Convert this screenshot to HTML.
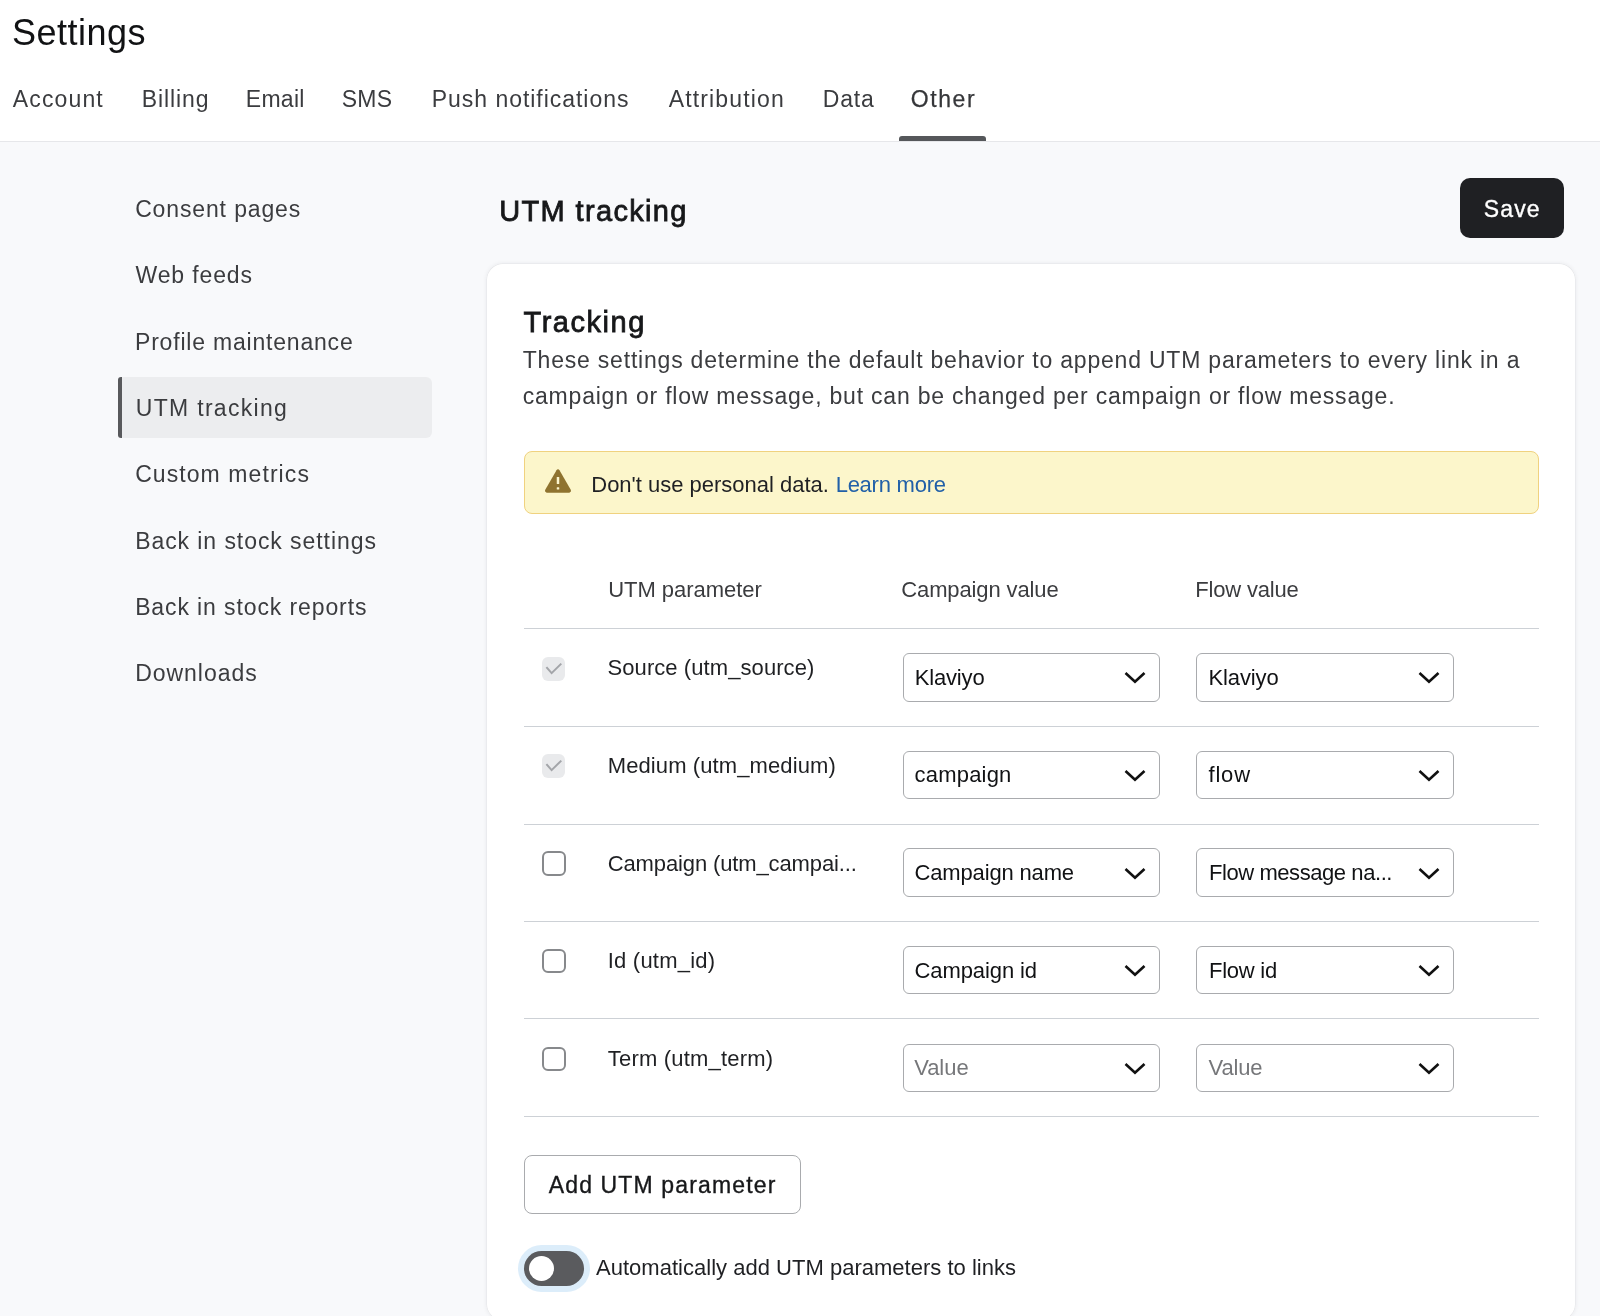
<!DOCTYPE html>
<html><head><meta charset="utf-8"><title>Settings</title>
<style>
html,body{margin:0;padding:0}
body{width:1600px;height:1316px;overflow:hidden;position:relative;background:#f8f9fb;font-family:"Liberation Sans",sans-serif}
.t{position:absolute;white-space:nowrap}
#root{position:absolute;left:0;top:0;width:1600px;height:1316px;will-change:transform}
</style></head><body><div id="root">
<div style="position:absolute;left:0px;top:0px;width:1600px;height:141px;background:#fff;border-bottom:1px solid #e6e7ea"></div>
<div class="t" style="left:12.00px;top:14.93px;font-size:36px;line-height:36px;color:#111214;letter-spacing:0.479px;">Settings</div>
<div class="t" style="left:12.75px;top:87.93px;font-size:23px;line-height:23px;color:#3b3c3f;letter-spacing:1.150px;">Account</div>
<div class="t" style="left:141.75px;top:87.93px;font-size:23px;line-height:23px;color:#3b3c3f;letter-spacing:0.900px;">Billing</div>
<div class="t" style="left:245.75px;top:87.93px;font-size:23px;line-height:23px;color:#3b3c3f;letter-spacing:0.287px;">Email</div>
<div class="t" style="left:341.75px;top:87.93px;font-size:23px;line-height:23px;color:#3b3c3f;letter-spacing:0.200px;">SMS</div>
<div class="t" style="left:431.75px;top:87.93px;font-size:23px;line-height:23px;color:#3b3c3f;letter-spacing:0.965px;">Push notifications</div>
<div class="t" style="left:668.75px;top:87.93px;font-size:23px;line-height:23px;color:#3b3c3f;letter-spacing:1.140px;">Attribution</div>
<div class="t" style="left:822.75px;top:87.93px;font-size:23px;line-height:23px;color:#3b3c3f;letter-spacing:0.800px;">Data</div>
<div class="t" style="left:910.75px;top:87.93px;font-size:23px;line-height:23px;color:#36373a;letter-spacing:1.600px;-webkit-text-stroke:0.25px #36373a;">Other</div>
<div style="position:absolute;left:899px;top:136px;width:87px;height:5px;background:#55575a;border-radius:3px 3px 0 0"></div>
<div style="position:absolute;left:118px;top:377.2px;width:314px;height:60.8px;background:#ecedef;border-radius:6px"></div>
<div style="position:absolute;left:117.5px;top:377.2px;width:4.5px;height:60.8px;background:#58595c;border-radius:3px 0 0 3px"></div>
<div class="t" style="left:135.15px;top:198.13px;font-size:23px;line-height:23px;color:#3b3c3f;letter-spacing:0.867px;">Consent pages</div>
<div class="t" style="left:135.55px;top:264.43px;font-size:23px;line-height:23px;color:#3b3c3f;letter-spacing:0.863px;">Web feeds</div>
<div class="t" style="left:135.00px;top:330.73px;font-size:23px;line-height:23px;color:#3b3c3f;letter-spacing:0.800px;">Profile maintenance</div>
<div class="t" style="left:135.75px;top:397.03px;font-size:23px;line-height:23px;color:#3b3c3f;letter-spacing:1.309px;">UTM tracking</div>
<div class="t" style="left:135.15px;top:463.33px;font-size:23px;line-height:23px;color:#3b3c3f;letter-spacing:1.077px;">Custom metrics</div>
<div class="t" style="left:135.15px;top:529.63px;font-size:23px;line-height:23px;color:#3b3c3f;letter-spacing:0.933px;">Back in stock settings</div>
<div class="t" style="left:135.15px;top:595.93px;font-size:23px;line-height:23px;color:#3b3c3f;letter-spacing:0.890px;">Back in stock reports</div>
<div class="t" style="left:135.15px;top:662.23px;font-size:23px;line-height:23px;color:#3b3c3f;letter-spacing:0.975px;">Downloads</div>
<div class="t" style="left:499.25px;top:197.15px;font-size:29px;line-height:29px;color:#17181a;letter-spacing:1.345px;-webkit-text-stroke:0.8px #17181a;">UTM tracking</div>
<div style="position:absolute;left:1460px;top:178px;width:103.5px;height:60px;background:#1f2023;border-radius:10px"></div>
<div class="t" style="left:1483.75px;top:198.03px;font-size:23px;line-height:23px;color:#ffffff;letter-spacing:1.133px;-webkit-text-stroke:0.35px #ffffff;">Save</div>
<div style="position:absolute;left:487px;top:263.7px;width:1088px;height:1056px;background:#fff;border-radius:16px;box-shadow:0 0 0 0.5px rgba(16,24,40,0.05),0 0 5px rgba(16,24,40,0.09)"></div>
<div class="t" style="left:523.50px;top:307.70px;font-size:29px;line-height:29px;color:#17181a;letter-spacing:1.521px;-webkit-text-stroke:0.8px #17181a;">Tracking</div>
<div class="t" style="left:522.75px;top:348.93px;font-size:23px;line-height:23px;color:#3b3c3f;letter-spacing:0.793px;">These settings determine the default behavior to append UTM parameters to every link in a</div>
<div class="t" style="left:522.75px;top:384.93px;font-size:23px;line-height:23px;color:#3b3c3f;letter-spacing:0.786px;">campaign or flow message, but can be changed per campaign or flow message.</div>
<div style="position:absolute;left:523.5px;top:451px;width:1015px;height:62.5px;box-sizing:border-box;background:#fcf6cb;border:1.5px solid #f0d27f;border-radius:8px"></div>
<svg style="position:absolute;left:543px;top:467px" width="30" height="28" viewBox="0 0 30 28"><path d="M15 2.2 Q15.9 2.2 16.5 3.2 L27.6 22.6 Q28.8 24.8 26.3 25.8 L3.7 25.8 Q1.2 24.8 2.4 22.6 L13.5 3.2 Q14.1 2.2 15 2.2 Z" fill="#8f732f"/><rect x="13.75" y="9.9" width="2.5" height="7.1" rx="0.5" fill="#fcf6cf"/><rect x="13.75" y="20.2" width="2.5" height="2.3" rx="0.5" fill="#fcf6cf"/></svg>
<div class="t" style="left:591.25px;top:474.18px;font-size:22px;line-height:22px;color:#1f2023;letter-spacing:-0.004px;">Don't use personal data.</div>
<div class="t" style="left:835.65px;top:474.18px;font-size:22px;line-height:22px;color:#2160a8;letter-spacing:-0.244px;">Learn more</div>
<div class="t" style="left:608.15px;top:578.58px;font-size:22px;line-height:22px;color:#3b3c3f;letter-spacing:-0.033px;">UTM parameter</div>
<div class="t" style="left:901.25px;top:578.58px;font-size:22px;line-height:22px;color:#3b3c3f;letter-spacing:-0.123px;">Campaign value</div>
<div class="t" style="left:1195.25px;top:578.58px;font-size:22px;line-height:22px;color:#3b3c3f;letter-spacing:-0.178px;">Flow value</div>
<div style="position:absolute;left:523.5px;top:628px;width:1015px;height:1px;background:#cdd1d6"></div>
<div style="position:absolute;left:523.5px;top:726px;width:1015px;height:1px;background:#cdd1d6"></div>
<div style="position:absolute;left:523.5px;top:823.5px;width:1015px;height:1px;background:#cdd1d6"></div>
<div style="position:absolute;left:523.5px;top:921px;width:1015px;height:1px;background:#cdd1d6"></div>
<div style="position:absolute;left:523.5px;top:1018px;width:1015px;height:1px;background:#cdd1d6"></div>
<div style="position:absolute;left:523.5px;top:1116px;width:1015px;height:1px;background:#cdd1d6"></div>
<div style="position:absolute;left:542.2px;top:656.65px;width:23.3px;height:24.2px;background:#e9eaec;border-radius:6px"></div>
<svg style="position:absolute;left:542.2px;top:656.65px" width="24" height="24" viewBox="0 0 24 24"><path d="M4.4 10.2 L9.6 16.1 L19.3 6.6" fill="none" stroke="#a3a5a9" stroke-width="2"/></svg>
<div class="t" style="left:607.50px;top:657.38px;font-size:22px;line-height:22px;color:#1f2023;letter-spacing:0.078px;">Source (utm_source)</div>
<div style="position:absolute;left:902.5px;top:653.0px;width:257.5px;height:48.5px;box-sizing:border-box;border:1.5px solid #a9abae;border-radius:6px;background:#fff"></div>
<div class="t" style="left:914.65px;top:666.73px;font-size:22px;line-height:22px;color:#111214;letter-spacing:-0.150px;">Klaviyo</div>
<svg style="position:absolute;left:1122.00px;top:668.25px" width="26" height="18" viewBox="0 0 26 18"><path d="M3.5 5 L13 13.8 L22.5 5" fill="none" stroke="#111" stroke-width="2.6"/></svg>
<div style="position:absolute;left:1196px;top:653.0px;width:257.5px;height:48.5px;box-sizing:border-box;border:1.5px solid #a9abae;border-radius:6px;background:#fff"></div>
<div class="t" style="left:1208.45px;top:666.73px;font-size:22px;line-height:22px;color:#111214;letter-spacing:-0.100px;">Klaviyo</div>
<svg style="position:absolute;left:1415.50px;top:668.25px" width="26" height="18" viewBox="0 0 26 18"><path d="M3.5 5 L13 13.8 L22.5 5" fill="none" stroke="#111" stroke-width="2.6"/></svg>
<div style="position:absolute;left:542.2px;top:754.3px;width:23.3px;height:24.2px;background:#e9eaec;border-radius:6px"></div>
<svg style="position:absolute;left:542.2px;top:754.30px" width="24" height="24" viewBox="0 0 24 24"><path d="M4.4 10.2 L9.6 16.1 L19.3 6.6" fill="none" stroke="#a3a5a9" stroke-width="2"/></svg>
<div class="t" style="left:607.75px;top:755.03px;font-size:22px;line-height:22px;color:#1f2023;letter-spacing:0.100px;">Medium (utm_medium)</div>
<div style="position:absolute;left:902.5px;top:750.65px;width:257.5px;height:48.5px;box-sizing:border-box;border:1.5px solid #a9abae;border-radius:6px;background:#fff"></div>
<div class="t" style="left:914.55px;top:764.38px;font-size:22px;line-height:22px;color:#111214;letter-spacing:0.200px;">campaign</div>
<svg style="position:absolute;left:1122.00px;top:765.90px" width="26" height="18" viewBox="0 0 26 18"><path d="M3.5 5 L13 13.8 L22.5 5" fill="none" stroke="#111" stroke-width="2.6"/></svg>
<div style="position:absolute;left:1196px;top:750.65px;width:257.5px;height:48.5px;box-sizing:border-box;border:1.5px solid #a9abae;border-radius:6px;background:#fff"></div>
<div class="t" style="left:1208.45px;top:764.38px;font-size:22px;line-height:22px;color:#111214;letter-spacing:0.833px;">flow</div>
<svg style="position:absolute;left:1415.50px;top:765.90px" width="26" height="18" viewBox="0 0 26 18"><path d="M3.5 5 L13 13.8 L22.5 5" fill="none" stroke="#111" stroke-width="2.6"/></svg>
<div style="position:absolute;left:542px;top:851.25px;width:23.5px;height:24.5px;box-sizing:border-box;border:2px solid #87898c;border-radius:6px;background:#fff"></div>
<div class="t" style="left:607.75px;top:852.68px;font-size:22px;line-height:22px;color:#1f2023;letter-spacing:-0.127px;">Campaign (utm_campai...</div>
<div style="position:absolute;left:902.5px;top:848.3px;width:257.5px;height:48.5px;box-sizing:border-box;border:1.5px solid #a9abae;border-radius:6px;background:#fff"></div>
<div class="t" style="left:914.55px;top:862.03px;font-size:22px;line-height:22px;color:#111214;letter-spacing:-0.158px;">Campaign name</div>
<svg style="position:absolute;left:1122.00px;top:863.55px" width="26" height="18" viewBox="0 0 26 18"><path d="M3.5 5 L13 13.8 L22.5 5" fill="none" stroke="#111" stroke-width="2.6"/></svg>
<div style="position:absolute;left:1196px;top:848.3px;width:257.5px;height:48.5px;box-sizing:border-box;border:1.5px solid #a9abae;border-radius:6px;background:#fff"></div>
<div class="t" style="left:1208.95px;top:862.03px;font-size:22px;line-height:22px;color:#111214;letter-spacing:-0.424px;">Flow message na...</div>
<svg style="position:absolute;left:1415.50px;top:863.55px" width="26" height="18" viewBox="0 0 26 18"><path d="M3.5 5 L13 13.8 L22.5 5" fill="none" stroke="#111" stroke-width="2.6"/></svg>
<div style="position:absolute;left:542px;top:948.9px;width:23.5px;height:24.5px;box-sizing:border-box;border:2px solid #87898c;border-radius:6px;background:#fff"></div>
<div class="t" style="left:607.75px;top:950.33px;font-size:22px;line-height:22px;color:#1f2023;letter-spacing:0.210px;">Id (utm_id)</div>
<div style="position:absolute;left:902.5px;top:945.95px;width:257.5px;height:48.5px;box-sizing:border-box;border:1.5px solid #a9abae;border-radius:6px;background:#fff"></div>
<div class="t" style="left:914.55px;top:959.68px;font-size:22px;line-height:22px;color:#111214;letter-spacing:-0.100px;">Campaign id</div>
<svg style="position:absolute;left:1122.00px;top:961.20px" width="26" height="18" viewBox="0 0 26 18"><path d="M3.5 5 L13 13.8 L22.5 5" fill="none" stroke="#111" stroke-width="2.6"/></svg>
<div style="position:absolute;left:1196px;top:945.95px;width:257.5px;height:48.5px;box-sizing:border-box;border:1.5px solid #a9abae;border-radius:6px;background:#fff"></div>
<div class="t" style="left:1209.05px;top:959.68px;font-size:22px;line-height:22px;color:#111214;letter-spacing:-0.250px;">Flow id</div>
<svg style="position:absolute;left:1415.50px;top:961.20px" width="26" height="18" viewBox="0 0 26 18"><path d="M3.5 5 L13 13.8 L22.5 5" fill="none" stroke="#111" stroke-width="2.6"/></svg>
<div style="position:absolute;left:542px;top:1046.55px;width:23.5px;height:24.5px;box-sizing:border-box;border:2px solid #87898c;border-radius:6px;background:#fff"></div>
<div class="t" style="left:607.75px;top:1047.98px;font-size:22px;line-height:22px;color:#1f2023;letter-spacing:0.200px;">Term (utm_term)</div>
<div style="position:absolute;left:902.5px;top:1043.6px;width:257.5px;height:48.5px;box-sizing:border-box;border:1.5px solid #a9abae;border-radius:6px;background:#fff"></div>
<div class="t" style="left:914.15px;top:1057.33px;font-size:22px;line-height:22px;color:#76777a;letter-spacing:-0.025px;">Value</div>
<svg style="position:absolute;left:1122.00px;top:1058.85px" width="26" height="18" viewBox="0 0 26 18"><path d="M3.5 5 L13 13.8 L22.5 5" fill="none" stroke="#111" stroke-width="2.6"/></svg>
<div style="position:absolute;left:1196px;top:1043.6px;width:257.5px;height:48.5px;box-sizing:border-box;border:1.5px solid #a9abae;border-radius:6px;background:#fff"></div>
<div class="t" style="left:1208.55px;top:1057.33px;font-size:22px;line-height:22px;color:#76777a;letter-spacing:-0.150px;">Value</div>
<svg style="position:absolute;left:1415.50px;top:1058.85px" width="26" height="18" viewBox="0 0 26 18"><path d="M3.5 5 L13 13.8 L22.5 5" fill="none" stroke="#111" stroke-width="2.6"/></svg>
<div style="position:absolute;left:523.5px;top:1154.5px;width:277px;height:59px;box-sizing:border-box;border:1.5px solid #a9abae;border-radius:8px;background:#fff"></div>
<div class="t" style="left:548.75px;top:1173.53px;font-size:23px;line-height:23px;color:#17181a;letter-spacing:1.137px;-webkit-text-stroke:0.35px #17181a;">Add UTM parameter</div>
<div style="position:absolute;left:517.7px;top:1244.6px;width:72.3px;height:47.7px;background:#dcedfa;border-radius:24px"></div>
<div style="position:absolute;left:523.8px;top:1250.8px;width:60px;height:35.4px;background:#5a5b5e;border-radius:18px"></div>
<div style="position:absolute;left:529.1px;top:1255.7px;width:25.3px;height:25.3px;background:#fff;border-radius:50%"></div>
<div class="t" style="left:596.05px;top:1257.18px;font-size:22px;line-height:22px;color:#1f2023;letter-spacing:0.015px;">Automatically add UTM parameters to links</div>
</div></body></html>
